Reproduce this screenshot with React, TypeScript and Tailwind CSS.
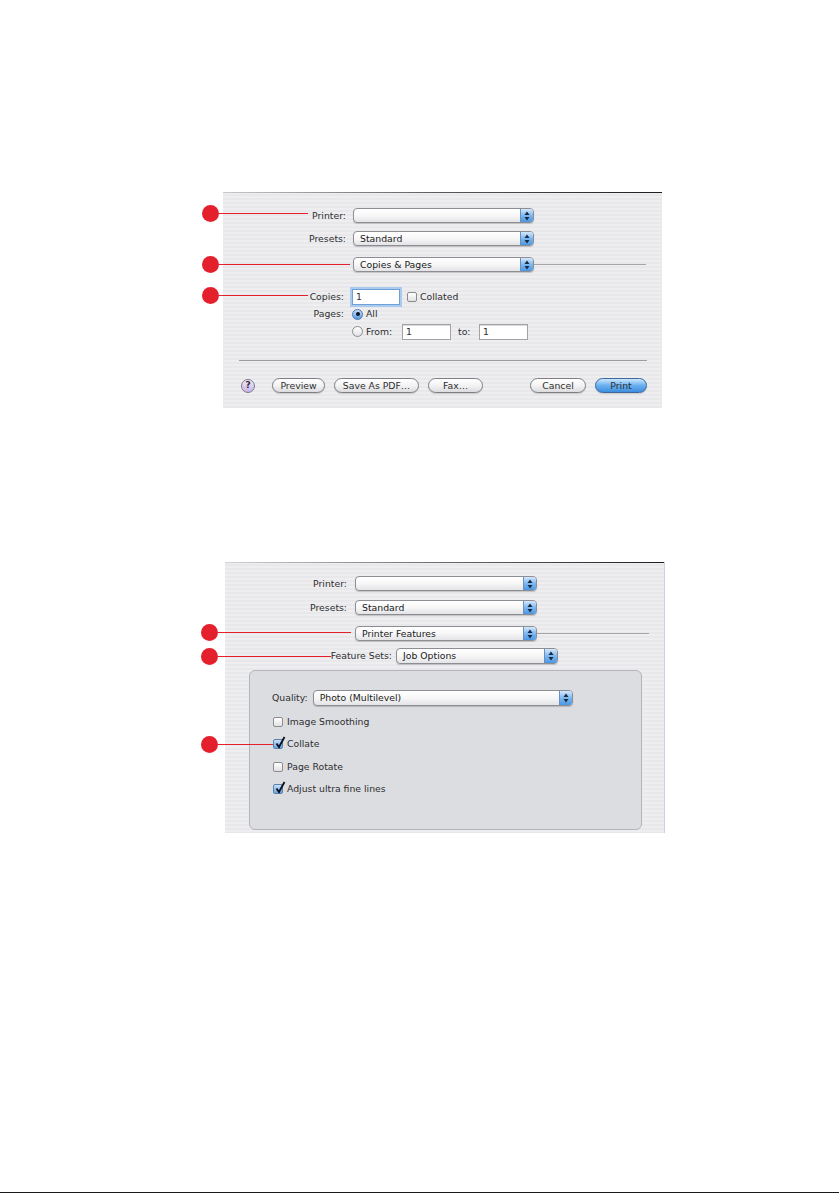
import React from 'react';

const Arrows: React.FC = () => (
  <svg width="6" height="10" viewBox="0 0 6 10">
    <path d="M3 0.5 L5.5 4 L0.5 4 Z" fill="#1b2a44" />
    <path d="M3 9.5 L5.5 6 L0.5 6 Z" fill="#1b2a44" />
  </svg>
);

const Popup: React.FC<{ label?: string; w: string; h?: string }> = ({ label, w, h = 'h-[15px]' }) => (
  <div className={`${w} ${h} flex items-stretch rounded-[4px] border border-[#8d8e93] bg-gradient-to-b from-white via-[#f7f7f8] to-[#e4e4e7] shadow-[0_1px_1px_rgba(0,0,0,0.18)] overflow-hidden`}>
    <span className="flex-1 pl-[6px] flex items-center whitespace-nowrap text-[#1a1a1a]">{label}</span>
    <span className="w-[13px] flex items-center justify-center border-l border-[#6b8fbd] bg-gradient-to-b from-[#d4e8fc] via-[#7db8f0] to-[#4a97e3]">
      <Arrows />
    </span>
  </div>
);

const Field: React.FC<{ value: string; w: string; focus?: boolean }> = ({ value, w, focus }) => (
  <div
    className={`${w} h-[16px] bg-white flex items-center pl-[3px] ${
      focus
        ? 'border border-[#6f9fd4] shadow-[0_0_0_2px_#a9cbf0]'
        : 'border border-[#a3a3a6] shadow-[inset_0_1px_0_#d8d8d8]'
    }`}
  >
    {value}
  </div>
);

const Checkbox: React.FC<{ checked?: boolean }> = ({ checked }) => (
  <span
    className={`relative block shrink-0 w-[10px] h-[10px] rounded-[2px] border ${
      checked
        ? 'border-[#5d7fa8] bg-gradient-to-b from-[#c6e0fa] to-[#5ea5ea]'
        : 'border-[#8c8c90] bg-gradient-to-b from-white to-[#e2e2e4]'
    }`}
  >
    {checked && (
      <svg className="absolute left-[1px] top-[-4px]" width="11" height="13" viewBox="0 0 11 13">
        <path d="M1.5 7.5 L4 11 L9.5 1" stroke="#0b0f18" strokeWidth="1.8" fill="none" />
      </svg>
    )}
  </span>
);

const Radio: React.FC<{ on?: boolean }> = ({ on }) => (
  <span
    className={`shrink-0 w-[11px] h-[11px] rounded-full border flex items-center justify-center ${
      on
        ? 'border-[#4d77aa] bg-gradient-to-b from-[#c7e1fb] to-[#4f9be6]'
        : 'border-[#8c8c90] bg-gradient-to-b from-white to-[#e2e2e4]'
    }`}
  >
    {on && <span className="w-[4px] h-[4px] rounded-full bg-[#0d1420]" />}
  </span>
);

const Button: React.FC<{ label: string; w: string; primary?: boolean }> = ({ label, w, primary }) => (
  <div
    className={`${w} h-[15px] rounded-full border flex items-center justify-center shadow-[0_1px_1px_rgba(0,0,0,0.15)] ${
      primary
        ? 'border-[#3e6899] bg-gradient-to-b from-[#cbe6fd] via-[#69b0ef] to-[#3d8ee0]'
        : 'border-[#7f7f83] bg-gradient-to-b from-white via-[#f3f3f4] to-[#dcdcdf]'
    }`}
  >
    {label}
  </div>
);

const Callout: React.FC<{ pos: string; len: string }> = ({ pos, len }) => (
  <div className={`absolute flex items-center h-[17px] ${pos}`}>
    <span className="w-[17px] h-[17px] rounded-full bg-[#e4202c] shrink-0" />
    <span className={`h-[1.5px] bg-[#e4202c] ${len}`} />
  </div>
);

const stripes =
  'bg-[repeating-linear-gradient(180deg,#eeeef1_0px,#eeeef1_2px,#e8e8eb_2px,#e8e8eb_4px)]';

export default function App() {
  return (
    <div className="relative w-[839px] h-[1193px] bg-white font-['DejaVu_Sans',sans-serif] font-normal text-[9.3px] text-[#2e2e30] leading-none">
      <div className="pt-[192px] pl-[223px]">
        {/* Copies & Pages dialog */}
        <div className={`relative w-[439px] h-[216px] ${stripes}`}>
          <div className="h-px bg-gradient-to-r from-[#c9c9cc] via-[#59595c] to-[#1d1d1f]" />
          <div className="flex flex-col pt-[15px]">
            <div className="flex items-center h-[15px]">
              <span className="w-[123px] text-right">Printer:</span>
              <div className="ml-[7px]">
                <Popup w="w-[181px]" />
              </div>
            </div>
            <div className="flex items-center h-[15px] mt-[8px]">
              <span className="w-[123px] text-right">Presets:</span>
              <div className="ml-[7px]">
                <Popup w="w-[181px]" label="Standard" />
              </div>
            </div>
            <div className="flex items-center h-[15px] mt-[11px]">
              <div className="w-[130px]" />
              <Popup w="w-[181px]" label="Copies & Pages" />
              <span className="w-[112px] h-px bg-[#a5a5a9]" />
            </div>
            <div className="flex items-center h-[16px] mt-[17px]">
              <span className="w-[121px] text-right">Copies:</span>
              <div className="ml-[8px]">
                <Field w="w-[48px]" value="1" focus />
              </div>
              <span className="ml-[7px]">
                <Checkbox />
              </span>
              <span className="ml-[3px]">Collated</span>
            </div>
            <div className="flex items-center h-[16px] mt-[1px]">
              <span className="w-[121px] text-right">Pages:</span>
              <span className="ml-[8px]">
                <Radio on />
              </span>
              <span className="ml-[3px]">All</span>
            </div>
            <div className="flex items-center h-[17px] mt-[1px]">
              <span className="w-[121px]" />
              <span className="ml-[8px]">
                <Radio />
              </span>
              <span className="ml-[3px] w-[36px]">From:</span>
              <Field w="w-[49px]" value="1" />
              <span className="ml-[7px] w-[21px]">to:</span>
              <Field w="w-[49px]" value="1" />
            </div>
            <div className="ml-[16px] w-[408px] h-px bg-[#9d9da1] mt-[20px]" />
            <div className="flex items-center h-[15px] mt-[17px]">
              <span className="ml-[18px] w-[14px] h-[14px] rounded-full border border-[#7e7a8a] bg-gradient-to-b from-[#f1e9fb] to-[#c7b3e6] flex items-center justify-center font-bold text-[9px]">
                ?
              </span>
              <span className="ml-[17px]">
                <Button w="w-[53px]" label="Preview" />
              </span>
              <span className="ml-[9px]">
                <Button w="w-[85px]" label="Save As PDF…" />
              </span>
              <span className="ml-[9px]">
                <Button w="w-[55px]" label="Fax…" />
              </span>
              <span className="ml-[47px]">
                <Button w="w-[56px]" label="Cancel" />
              </span>
              <span className="ml-[9px]">
                <Button w="w-[52px]" label="Print" primary />
              </span>
            </div>
          </div>

          <Callout pos="left-[-21px] top-[13px]" len="w-[89px]" />
          <Callout pos="left-[-21px] top-[64px]" len="w-[131px]" />
          <Callout pos="left-[-21px] top-[95px]" len="w-[89px]" />
        </div>

        {/* Printer Features dialog */}
        <div className={`relative mt-[154px] ml-[2px] w-[440px] h-[271px] border-r border-[#c9d3e2] ${stripes}`}>
          <div className="h-px bg-gradient-to-r from-[#d2d2d5] via-[#6a6a6d] to-[#1d1d1f]" />
          <div className="flex flex-col pt-[13px]">
            <div className="flex items-center h-[15px]">
              <span className="w-[122px] text-right">Printer:</span>
              <div className="ml-[8px]">
                <Popup w="w-[182px]" />
              </div>
            </div>
            <div className="flex items-center h-[15px] mt-[9px]">
              <span className="w-[122px] text-right">Presets:</span>
              <div className="ml-[8px]">
                <Popup w="w-[182px]" label="Standard" />
              </div>
            </div>
            <div className="flex items-center h-[15px] mt-[11px]">
              <div className="w-[130px]" />
              <Popup w="w-[182px]" label="Printer Features" />
              <span className="w-[112px] h-px bg-[#a5a5a9]" />
            </div>
            <div className="flex items-center h-[16px] mt-[7px]">
              <span className="w-[167px] text-right">Feature Sets:</span>
              <div className="ml-[4px]">
                <Popup w="w-[162px]" h="h-[16px]" label="Job Options" />
              </div>
            </div>
            <div className="mt-[6px] ml-[24px] w-[393px] h-[160px] rounded-[6px] border border-[#b4b5ba] bg-[#dcdde1] flex flex-col pt-[19px]">
              <div className="flex items-center h-[16px] pl-[22px]">
                <span>Quality:</span>
                <div className="ml-[5px]">
                  <Popup w="w-[260px]" h="h-[16px]" label="Photo (Multilevel)" />
                </div>
              </div>
              <div className="flex items-center h-[14px] mt-[9px] pl-[23px]">
                <Checkbox />
                <span className="ml-[4px]">Image Smoothing</span>
              </div>
              <div className="flex items-center h-[14px] mt-[8px] pl-[23px]">
                <Checkbox checked />
                <span className="ml-[4px]">Collate</span>
              </div>
              <div className="flex items-center h-[14px] mt-[9px] pl-[23px]">
                <Checkbox />
                <span className="ml-[4px]">Page Rotate</span>
              </div>
              <div className="flex items-center h-[14px] mt-[8px] pl-[23px]">
                <Checkbox checked />
                <span className="ml-[4px]">Adjust ultra fine lines</span>
              </div>
            </div>
          </div>

          <Callout pos="left-[-24px] top-[62px]" len="w-[133px]" />
          <Callout pos="left-[-24px] top-[86px]" len="w-[113px]" />
          <Callout pos="left-[-24px] top-[174px]" len="w-[55px]" />
        </div>
      </div>

      <div className="absolute bottom-0 left-0 w-full h-px bg-[#1a1a1a]" />
    </div>
  );
}
